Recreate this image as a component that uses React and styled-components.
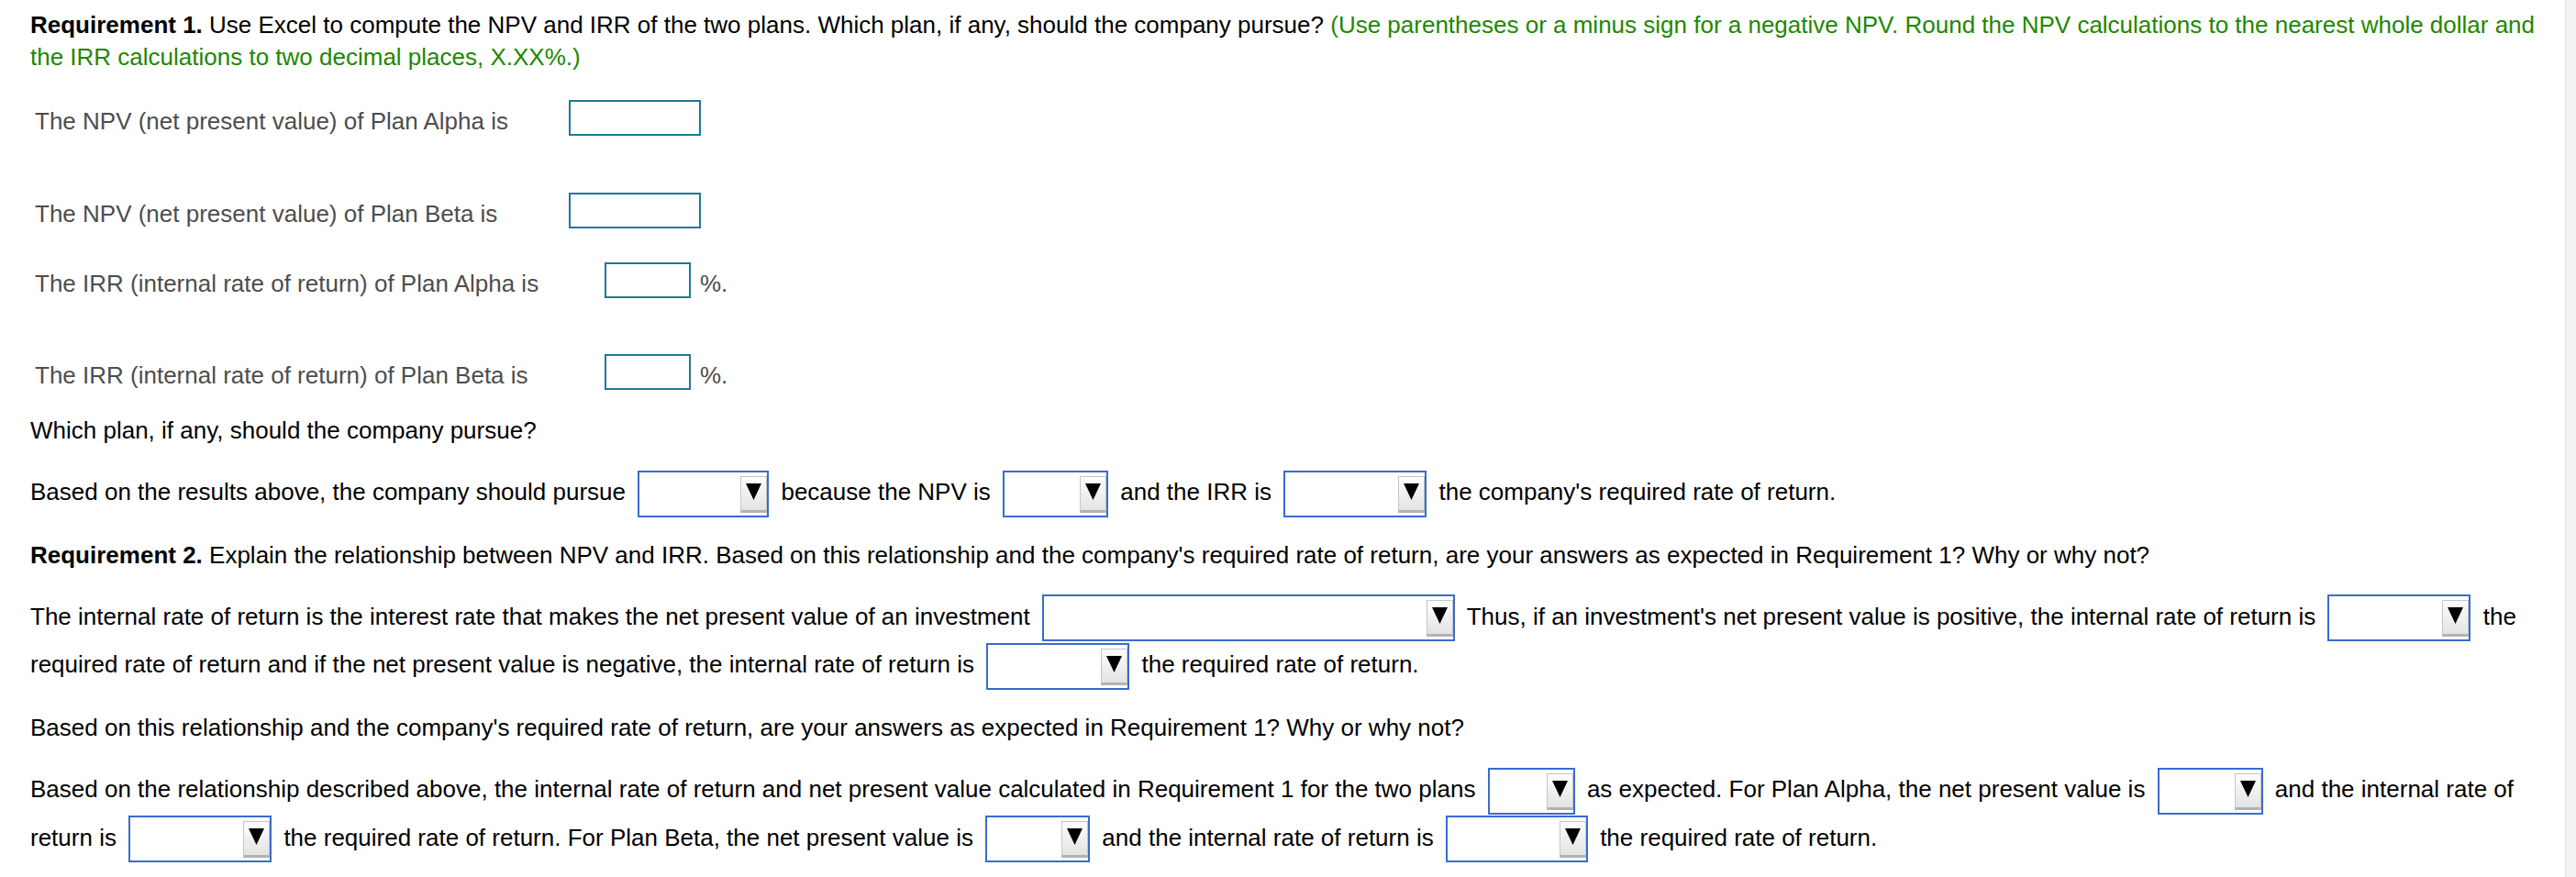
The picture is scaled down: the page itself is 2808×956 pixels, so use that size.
import React from "react";
import styled, { createGlobalStyle } from "styled-components";

const GlobalStyle = createGlobalStyle`
  html, body {
    margin: 0;
    padding: 0;
    background: #fff;
  }
  body {
    font-family: "Liberation Sans", Arial, Helvetica, sans-serif;
    font-size: 26px;
    color: #000;
  }
`;

const Page = styled.div`
  display: flex;
  width: 2808px;
  height: 956px;
  overflow: hidden;
`;

const Content = styled.main`
  flex: 1;
  min-width: 0;
  box-sizing: border-box;
  padding: 10px 11px 0 33px;
`;

const ScrollTrack = styled.div`
  width: 12px;
  flex-shrink: 0;
  box-sizing: border-box;
  background: #f3f3f3;
  border-left: 1px solid #e4e4e4;
`;

const Intro = styled.p`
  margin: 0;
  line-height: 35px;
`;

const Bold = styled.strong`
  font-weight: bold;
`;

const Hint = styled.span`
  color: #1e8700;
`;

const AnswerRow = styled.div`
  display: flex;
  align-items: flex-start;
  padding-left: 5px;
  margin-top: ${(p) => p.$top}px;
`;

const Label = styled.span`
  width: ${(p) => p.$width}px;
  flex-shrink: 0;
  padding-top: 6px;
  line-height: 35px;
  color: #4d4d4d;
`;

const NumberBox = styled.input`
  width: 144px;
  height: 39px;
  margin: 0;
  padding: 0 6px;
  box-sizing: border-box;
  border: 2px solid #1b7a98;
  border-radius: 0;
  background: #fff;
  font: inherit;
  outline: none;
`;

const Unit = styled.span`
  margin-left: 10px;
  padding-top: 6px;
  line-height: 35px;
  color: #4d4d4d;
`;

const Question = styled.p`
  margin: ${(p) => p.$top}px 0 0;
  line-height: 35px;
`;

const Prose = styled.p`
  margin: 24px 0 0;
  line-height: 50px;
`;

const SelectBox = styled.span`
  display: inline-flex;
  justify-content: flex-end;
  align-items: flex-start;
  vertical-align: middle;
  width: ${(p) => p.$width}px;
  height: 51px;
  margin: 0 6px;
  padding-top: 4px;
  box-sizing: border-box;
  border: 2px solid #3b6bcf;
  background: #fff;
`;

const ArrowButton = styled.span`
  display: flex;
  justify-content: center;
  width: 29px;
  height: 40px;
  padding-top: 7px;
  box-sizing: border-box;
  border: 1px solid #c6c6c6;
  border-bottom: 3px solid #b2b2b2;
  background: linear-gradient(#fdfdfd, #e3e3e3);
`;

const Dropdown = ({ width }) => (
  <SelectBox $width={width} role="combobox">
    <ArrowButton>
      <svg width="17" height="18" viewBox="0 0 17 18">
        <polygon points="0,0 17,0 8.5,18" fill="#000" />
      </svg>
    </ArrowButton>
  </SelectBox>
);

const App = () => (
  <Page>
    <GlobalStyle />
    <Content>
      <Intro>
        <Bold>Requirement 1.</Bold> Use Excel to compute the NPV and IRR of the
        two plans. Which plan, if any, should the company pursue?{" "}
        <Hint>
          (Use parentheses or a minus sign for a negative NPV. Round the NPV
          calculations to the nearest whole dollar and the IRR calculations to
          two decimal places, X.XX%.)
        </Hint>
      </Intro>

      <AnswerRow $top={29}>
        <Label $width={582}>The NPV (net present value) of Plan Alpha is</Label>
        <NumberBox />
      </AnswerRow>
      <AnswerRow $top={60}>
        <Label $width={582}>The NPV (net present value) of Plan Beta is</Label>
        <NumberBox />
      </AnswerRow>
      <AnswerRow $top={35}>
        <Label $width={621}>The IRR (internal rate of return) of Plan Alpha is</Label>
        <NumberBox style={{ width: 94 }} />
        <Unit>%.</Unit>
      </AnswerRow>
      <AnswerRow $top={59}>
        <Label $width={621}>The IRR (internal rate of return) of Plan Beta is</Label>
        <NumberBox style={{ width: 94 }} />
        <Unit>%.</Unit>
      </AnswerRow>

      <Question $top={25}>Which plan, if any, should the company pursue?</Question>

      <Prose>
        Based on the results above, the company should pursue{" "}
        <Dropdown width={143} /> because the NPV is <Dropdown width={115} /> and
        the IRR is <Dropdown width={156} /> the company's required rate of
        return.
      </Prose>

      <Question $top={24}>
        <Bold>Requirement 2.</Bold> Explain the relationship between NPV and IRR.
        Based on this relationship and the company's required rate of return,
        are your answers as expected in Requirement 1? Why or why not?
      </Question>

      <Prose>
        The internal rate of return is the interest rate that makes the net
        present value of an investment <Dropdown width={450} /> Thus, if an
        investment's net present value is positive, the internal rate of return
        is <Dropdown width={156} /> the required rate of return and if the net
        present value is negative, the internal rate of return is{" "}
        <Dropdown width={156} /> the required rate of return.
      </Prose>

      <Question $top={24}>
        Based on this relationship and the company's required rate of return,
        are your answers as expected in Requirement 1? Why or why not?
      </Question>

      <Prose>
        Based on the relationship described above, the internal rate of return
        and net present value calculated in Requirement 1 for the two plans{" "}
        <Dropdown width={95} /> as expected. For Plan Alpha, the net present
        value is <Dropdown width={115} /> and the internal rate of return is{" "}
        <Dropdown width={156} /> the required rate of return. For Plan Beta, the
        net present value is <Dropdown width={114} /> and the internal rate of
        return is <Dropdown width={155} /> the required rate of return.
      </Prose>
    </Content>
    <ScrollTrack />
  </Page>
);

export default App;
